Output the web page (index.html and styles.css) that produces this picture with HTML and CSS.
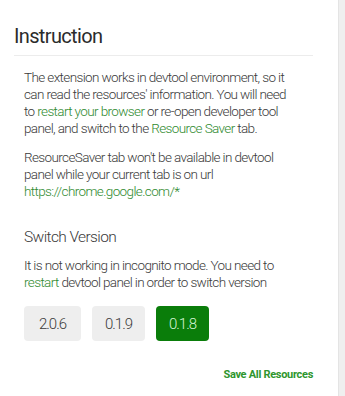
FILE: index.html
```html
<!DOCTYPE html>
<html lang="en">
  <head>
    <meta charset="UTF-8" />
    <meta name="viewport" content="width=device-width, initial-scale=1.0" />
    <title>Resource Saver</title>
    <link rel="stylesheet" href="styles.css">
  </head>
  <body>
    <div class="page">
      <main class="panel">
        <h1 class="title">Instruction</h1>

        <p class="text first">
          The extension works in devtool environment, so it<br>
          can read the resources' information. You will need<br>
          to <a href="#">restart your browser</a> or re-open developer tool<br>
          panel, and switch to the <a href="#">Resource Saver</a> tab.
        </p>
        <p class="text">
          ResourceSaver tab won't be available in devtool<br>
          panel while your current tab is on url<br>
          <a href="#">https://chrome.google.com/*</a>
        </p>

        <h2 class="subtitle">Switch Version</h2>
        <p class="text">
          It is not working in incognito mode. You need to<br>
          <a href="#">restart</a> devtool panel in order to switch version
        </p>

        <div class="versions">
          <button class="version">2.0.6</button>
          <button class="version">0.1.9</button>
          <button class="version active">0.1.8</button>
        </div>

        <div class="actions">
          <a href="#" class="save-all">Save All Resources</a>
        </div>
      </main>
      <div class="scrollbar"></div>
    </div>
  </body>
</html>
```

FILE: styles.css
```css
* {
  margin: 0;
  padding: 0;
  box-sizing: border-box;
}

body {
  font-family: Roboto, "Liberation Sans", sans-serif;
  color: #474747;
  background: #fff;
}

.page {
  display: flex;
  min-height: 396px;
}

.panel {
  flex: 1;
  padding: 24px 25px 0 14px;
}

.scrollbar {
  width: 7px;
  background: #efefef;
  border-left: 1px solid #e4e4e4;
}

.title {
  font-size: 20px;
  line-height: 24px;
  font-weight: normal;
  letter-spacing: -0.65px;
  color: #2b2b2b;
  padding-bottom: 7px;
  border-bottom: 1px solid #ececec;
}

.text {
  font-size: 13.5px;
  font-weight: 300;
  line-height: 17px;
  letter-spacing: -0.62px;
  white-space: nowrap;
  color: #3a3a3a;
  margin: 12px 0 0 10px;
}

.text.first {
  margin-top: 13px;
}

a {
  color: #2f8a2f;
  text-decoration: none;
}

.subtitle {
  font-size: 15.5px;
  line-height: 20px;
  font-weight: 300;
  letter-spacing: -0.6px;
  color: #3a3a3a;
  margin: 27px 0 0 10px;
}

.subtitle + .text {
  margin-top: 10px;
}

.versions {
  display: flex;
  gap: 11px;
  margin: 15px 0 0 10px;
}

.version {
  font-family: inherit;
  font-size: 15px;
  font-weight: 300;
  letter-spacing: -1px;
  height: 35px;
  width: 53px;
  border: none;
  border-radius: 4px;
  background: #eeeeee;
  color: #3a3a3a;
}

.version:first-child {
  width: 57px;
}

.version.active {
  background: #0a7d0a;
  color: #d4f5d4;
}

.actions {
  display: flex;
  justify-content: flex-end;
  margin-top: 27px;
}

.save-all {
  font-size: 11px;
  line-height: 14px;
  font-weight: bold;
  letter-spacing: -0.3px;
  color: #2e962e;
}
```
